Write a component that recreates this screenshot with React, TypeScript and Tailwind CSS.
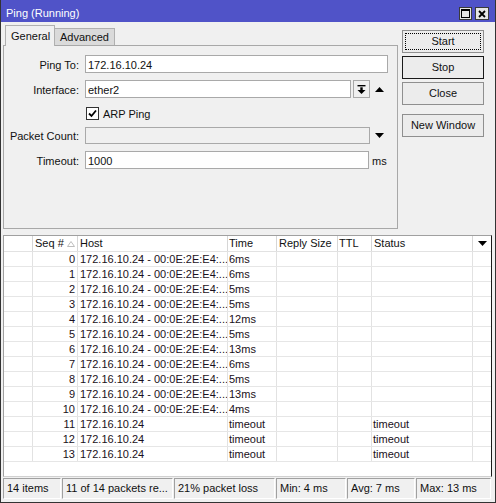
import React from "react";

const times = ["6ms", "6ms", "5ms", "5ms", "12ms", "5ms", "13ms", "6ms", "5ms", "13ms", "4ms"];
const rows = [
  ...times.map((t, i) => ({ seq: i, host: "172.16.10.24 - 00:0E:2E:E4:...", time: t, status: "" })),
  { seq: 11, host: "172.16.10.24", time: "timeout", status: "timeout" },
  { seq: 12, host: "172.16.10.24", time: "timeout", status: "timeout" },
  { seq: 13, host: "172.16.10.24", time: "timeout", status: "timeout" },
];

const cols = "grid grid-cols-[29px_45px_150px_49px_61px_34px_101px_18px]";

function TriDown() {
  return (
    <svg width="9" height="5" viewBox="0 0 9 5">
      <polygon points="0,0 9,0 4.5,5" fill="#000" />
    </svg>
  );
}
function TriUp() {
  return (
    <svg width="9" height="5" viewBox="0 0 9 5">
      <polygon points="0,5 9,5 4.5,0" fill="#000" />
    </svg>
  );
}

function Btn({ children, variant }: { children: React.ReactNode; variant?: "focus" | "default" }) {
  const border = variant === "default" ? "border-[#1a1a1a]" : "border-[#8f8f8f]";
  return (
    <div className={`relative flex h-[23px] w-[82px] items-center justify-center border ${border} bg-[#ececec]`}>
      {variant === "focus" && (
        <div className="absolute inset-[2px] border border-dotted border-[#000]" />
      )}
      <span className="relative">{children}</span>
    </div>
  );
}

export default function App() {
  return (
    <div className="flex h-[503px] w-[496px] flex-col border-x border-b border-[#333] bg-[#f0f0f0] font-['Liberation_Sans',Arial,sans-serif] text-[11px] leading-none text-[#111]">
      {/* Title bar */}
      <div className="flex h-[22px] shrink-0 justify-between bg-[#5053c8] pl-[5px] pr-[6px]">
        <div className="pt-[8px] text-white">Ping (Running)</div>
        <div className="flex gap-[3px] pt-[7px]">
          <div className="flex h-[13px] w-[13px] items-center justify-center border border-[#3a3a3a] bg-[#e6e6e6]">
            <svg width="9" height="9" viewBox="0 0 9 9">
              <rect x="0.5" y="0.5" width="8" height="8" fill="none" stroke="#000" />
              <rect x="0" y="0" width="9" height="2" fill="#000" />
            </svg>
          </div>
          <div className="flex h-[13px] w-[14px] items-center justify-center border border-[#3a3a3a] bg-[#e6e6e6]">
            <svg width="8" height="8" viewBox="0 0 8 8">
              <path d="M1 1 L7 7 M7 1 L1 7" stroke="#000" strokeWidth="1.8" />
            </svg>
          </div>
        </div>
      </div>

      {/* Top section */}
      <div className="flex shrink-0">
        <div className="ml-[2px] flex w-[395px] flex-col">
          <div className="flex h-[23px] items-end pl-[2px]">
            <div className="relative z-10 mb-[-1px] flex h-[21px] w-[50px] items-center border-x border-t border-[#b0b0b0] bg-[#f0f0f0] pl-[5px]">
              General
            </div>
            <div className="flex h-[17px] w-[60px] items-center border-r border-t border-[#b0b0b0] bg-[#dadada] pl-[5px]">
              Advanced
            </div>
          </div>
          <div className="flex h-[184px] flex-col border border-[#a8a8a8] pt-[9px]">
            {/* Ping To */}
            <div className="flex h-[18px] items-center">
              <div className="w-[75px] pt-[2px] text-right">Ping To:</div>
              <div className="ml-[6px] flex h-[18px] w-[303px] items-center border border-[#a9a9a9] bg-white pl-[2px] pt-[2px]">
                172.16.10.24
              </div>
            </div>
            {/* Interface */}
            <div className="mt-[7px] flex h-[18px] items-center">
              <div className="w-[75px] pt-[2px] text-right">Interface:</div>
              <div className="ml-[6px] flex h-[18px] w-[266px] items-center border border-[#a9a9a9] bg-white pl-[2px] pt-[2px]">
                ether2
              </div>
              <div className="ml-[2px] flex h-[18px] w-[17px] items-center justify-center border border-[#a9a9a9] bg-[#f0f0f0]">
                <svg width="9" height="9" viewBox="0 0 9 9">
                  <rect x="0.5" y="0" width="8" height="1.4" fill="#000" />
                  <rect x="3.3" y="2.3" width="2.4" height="3" fill="#000" />
                  <polygon points="0.5,5 8.5,5 4.5,9" fill="#000" />
                </svg>
              </div>
              <div className="ml-[5px] flex">
                <TriUp />
              </div>
            </div>
            {/* ARP Ping */}
            <div className="mt-[8px] flex h-[14px] items-center">
              <div className="ml-[82px] flex h-[13px] w-[13px] items-center justify-center border border-[#333] bg-white">
                <svg width="9" height="9" viewBox="0 0 9 9">
                  <path d="M1 4.5 L3.5 7 L8 1.5" fill="none" stroke="#000" strokeWidth="1.8" />
                </svg>
              </div>
              <div className="ml-[4px] pt-[2px]">ARP Ping</div>
            </div>
            {/* Packet Count */}
            <div className="mt-[7px] flex h-[17px] items-center">
              <div className="w-[75px] pt-[2px] text-right">Packet Count:</div>
              <div className="ml-[6px] h-[17px] w-[285px] border border-[#a9a9a9] bg-[#f0f0f0]" />
              <div className="ml-[5px] flex">
                <TriDown />
              </div>
            </div>
            {/* Timeout */}
            <div className="mt-[7px] flex h-[18px] items-center">
              <div className="w-[75px] pt-[2px] text-right">Timeout:</div>
              <div className="ml-[6px] flex h-[18px] w-[284px] items-center border border-[#a9a9a9] bg-white pl-[2px] pt-[2px]">
                1000
              </div>
              <div className="ml-[3px] pt-[2px]">ms</div>
            </div>
          </div>
        </div>
        <div className="ml-[4px] flex flex-col gap-[3px] pt-[8px]">
          <Btn variant="focus">Start</Btn>
          <Btn variant="default">Stop</Btn>
          <Btn>Close</Btn>
          <div className="mt-[6px]">
            <Btn>New Window</Btn>
          </div>
        </div>
      </div>

      {/* Table */}
      <div className="ml-[2px] mt-[6px] flex h-[242px] w-[489px] shrink-0 flex-col border-l border-t border-r border-b border-l-[#a0a0a0] border-t-[#a0a0a0] border-r-[#1a1a1a] border-b-[#d0d0d0] bg-white">
        <div className={`${cols} h-[16px] shrink-0 border-b border-[#e2e2e2]`}>
          <div className="border-r border-[#d6d6d6]" />
          <div className="flex items-center border-r border-[#d6d6d6] pl-[2px]">
            Seq #
            <svg className="ml-[3px]" width="8" height="6" viewBox="0 0 8 6">
              <polygon points="0.5,5.5 7.5,5.5 4,0.5" fill="none" stroke="#bdbdbd" />
            </svg>
          </div>
          <div className="flex items-center border-r border-[#d6d6d6] pl-[2px]">Host</div>
          <div className="flex items-center border-r border-[#d6d6d6] pl-[1px]">Time</div>
          <div className="flex items-center border-r border-[#d6d6d6] pl-[2px]">Reply Size</div>
          <div className="flex items-center border-r border-[#d6d6d6] pl-[1px]">TTL</div>
          <div className="flex items-center border-r border-[#d6d6d6] pl-[2px]">Status</div>
          <div className="flex items-center justify-center">
            <TriDown />
          </div>
        </div>
        {rows.map((r) => (
          <div key={r.seq} className={`${cols} h-[15px] shrink-0 border-b border-[#e6e6e6] text-[#1a1020]`}>
            <div className="border-r border-[#e2e2e2]" />
            <div className="flex items-center justify-end border-r border-[#e2e2e2] pr-[2px]">{r.seq}</div>
            <div className="flex items-center overflow-hidden whitespace-nowrap border-r border-[#e2e2e2] pl-[2px]">{r.host}</div>
            <div className="flex items-center overflow-hidden whitespace-nowrap border-r border-[#e2e2e2] pl-[1px]">{r.time}</div>
            <div className="border-r border-[#e2e2e2]" />
            <div className="border-r border-[#e2e2e2]" />
            <div className="flex items-center border-r border-[#e2e2e2] pl-[1px]">{r.status}</div>
            <div />
          </div>
        ))}
      </div>

      {/* Status bar */}
      <div className="ml-[2px] mt-[1px] flex h-[21px] shrink-0 gap-[1px]">
        {[
          ["14 items", "w-[58px]"],
          ["11 of 14 packets re...", "w-[111px]"],
          ["21% packet loss", "w-[101px]"],
          ["Min: 4 ms", "w-[70px]"],
          ["Avg: 7 ms", "w-[68px]"],
          ["Max: 13 ms", "w-[75px]"],
        ].map(([t, w]) => (
          <div
            key={t}
            className={`${w} flex items-center whitespace-nowrap border border-l-[#a0a0a0] border-t-[#a0a0a0] border-r-white border-b-white pl-[3px]`}
          >
            {t}
          </div>
        ))}
      </div>
    </div>
  );
}
